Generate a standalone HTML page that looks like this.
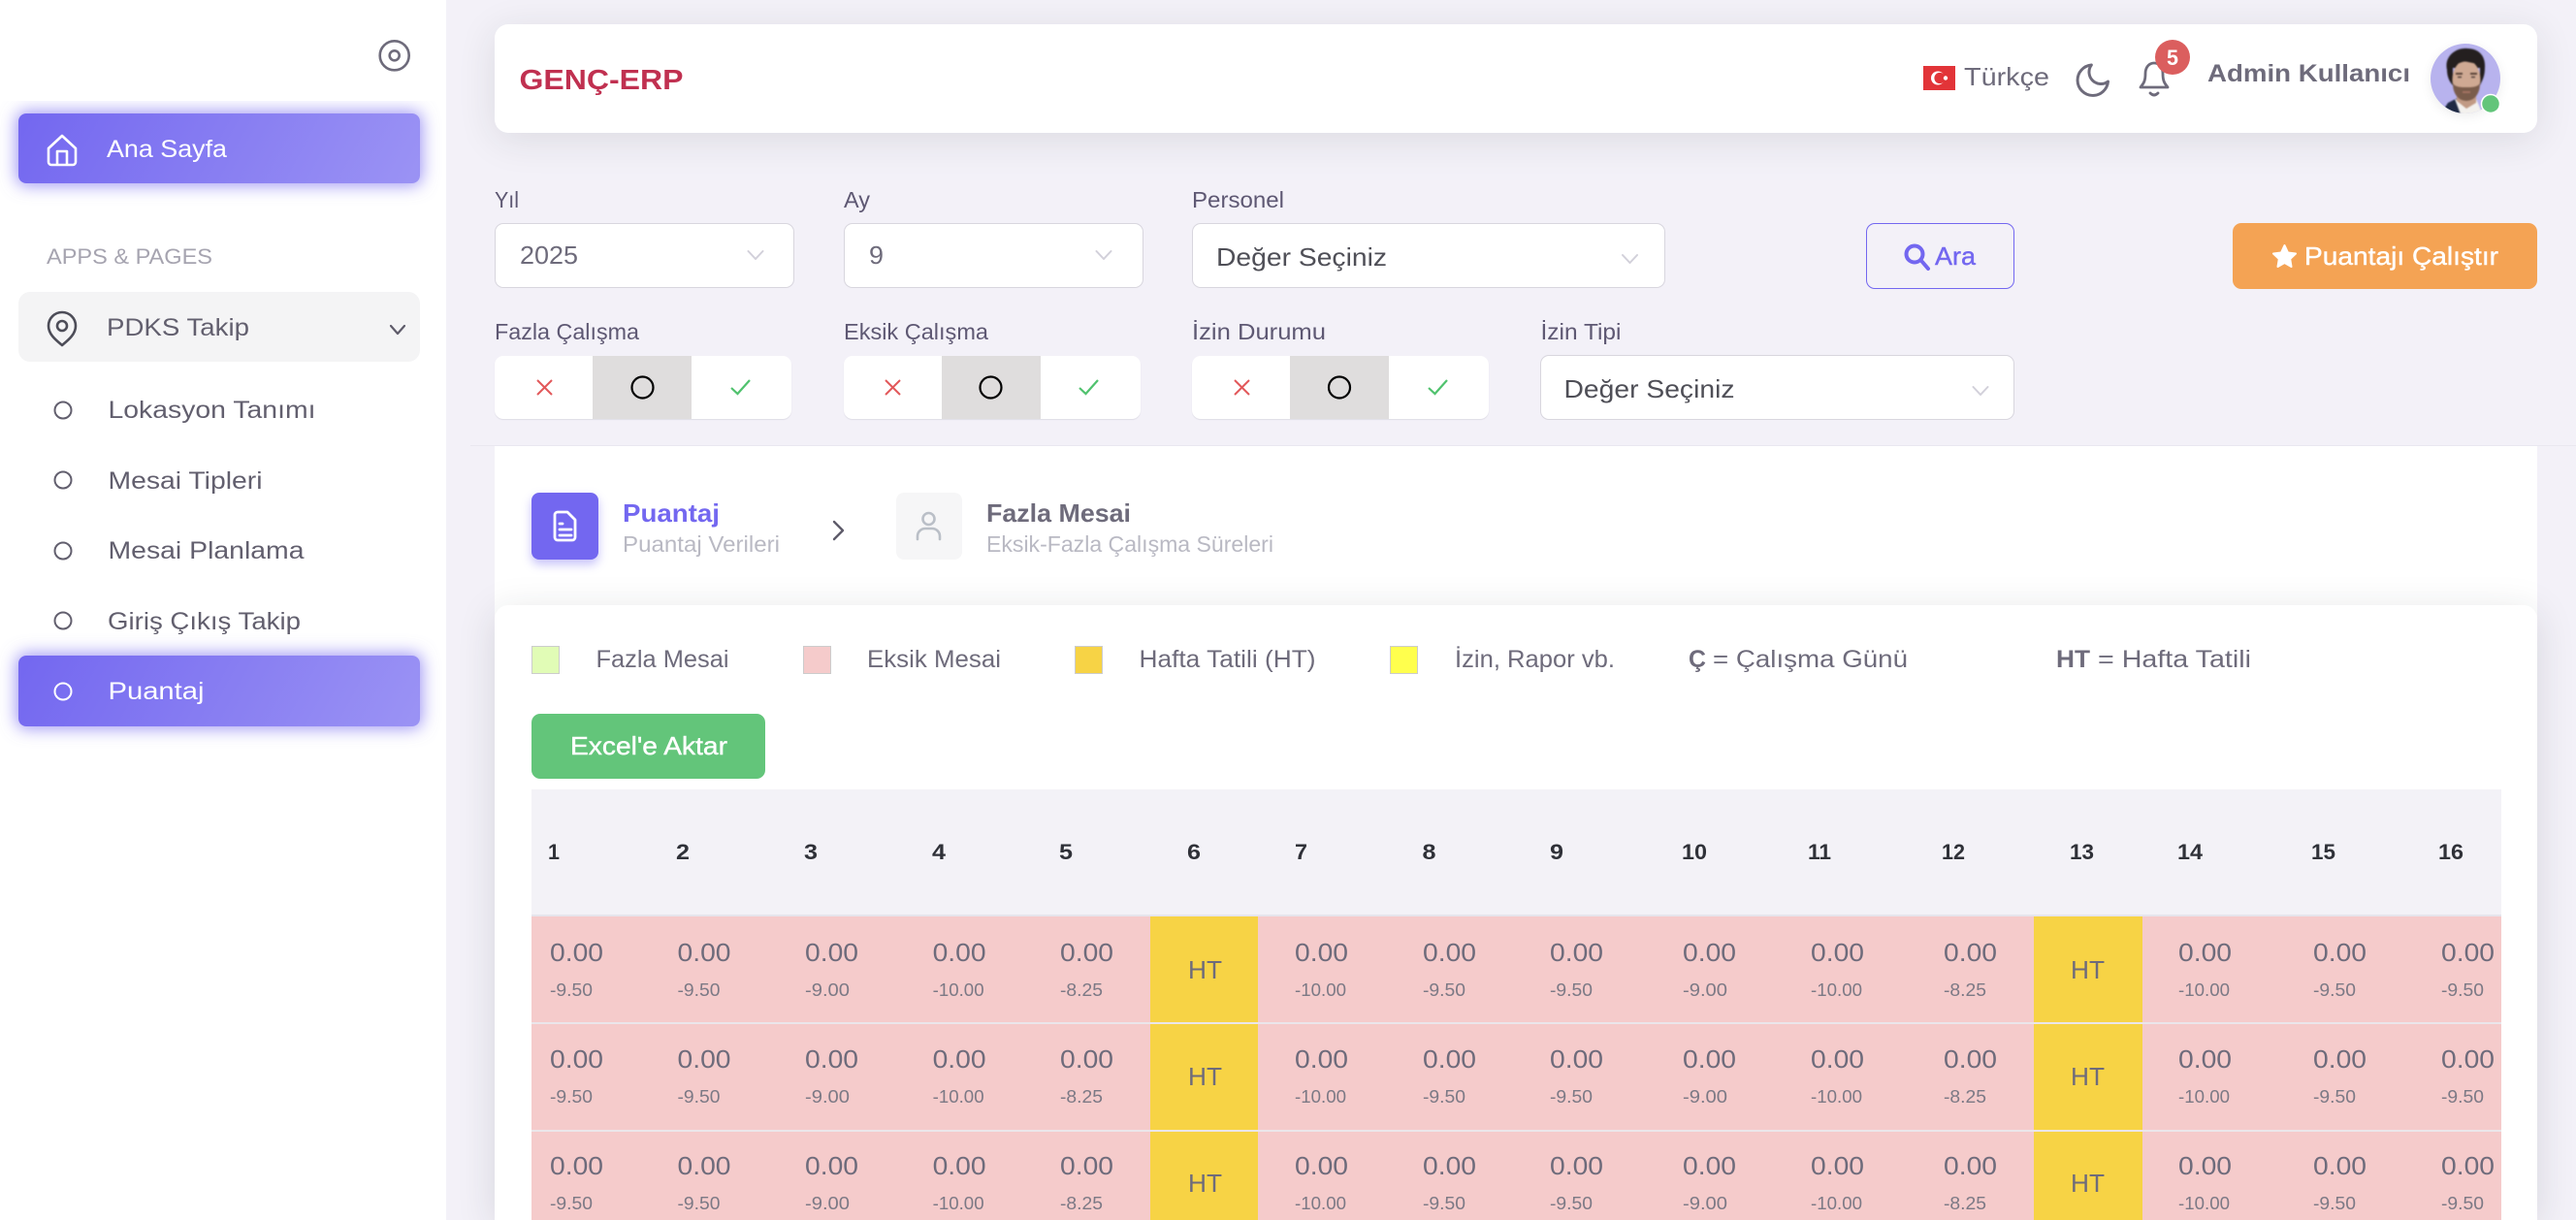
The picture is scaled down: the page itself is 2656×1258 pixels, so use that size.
<!DOCTYPE html>
<html lang="tr"><head><meta charset="utf-8"><title>GENÇ-ERP</title>
<style>
html,body{margin:0;padding:0;width:2656px;height:1258px;overflow:hidden;background:#f3f1f8}
#r{position:relative;width:2656px;height:1258px;overflow:hidden;background:#f3f1f8;contain:paint}
.b{position:absolute;box-sizing:border-box}
svg{position:absolute;left:0;top:0;display:block}
text{font-family:"Liberation Sans",sans-serif;fill:#6e6b7b}
.side{font-size:25px;fill:#625f6e}
.lb{font-size:23px;fill:#5e5873}
.sel{font-size:26px}
.lg{font-size:25px}
.v{font-size:26px}
.s{font-size:18px;fill:#7c7985}
.h{font-size:22px;font-weight:700;fill:#2f3138}
.w{fill:#fff;stroke:#fff;stroke-width:.4}
.i{fill:none;stroke-linecap:round;stroke-linejoin:round}
.ch{fill:none;stroke:#d2d0da;stroke-width:2;stroke-linecap:round;stroke-linejoin:round}
.x{fill:none;stroke:#e2585a;stroke-width:2}
.ck{fill:none;stroke:#50c26e;stroke-width:2.2}
.o{fill:none;stroke:#000;stroke-width:2.2}
</style></head><body><div id="r">
<div class="b" style="left:0;top:0;width:460px;height:1258px;background:#fff"></div>
<div class="b" style="left:510px;top:25px;width:2106px;height:112px;background:#fff;border-radius:14px;box-shadow:0 7px 40px rgba(34,41,47,.11)"></div>
<div class="b" style="left:0;top:104px;width:460px;height:130px;overflow:hidden"><div class="b" style="left:19px;top:13px;width:414px;height:72px;border-radius:8px;background:linear-gradient(118deg,#7367f0,#9b93f4);box-shadow:0 0 17px 2px rgba(115,103,240,.7)"></div></div>
<div class="b" style="left:19px;top:301px;width:414px;height:72px;border-radius:12px;background:#f4f4f5"></div>
<div class="b" style="left:19px;top:676px;width:414px;height:73px;border-radius:8px;background:linear-gradient(118deg,#7367f0,#9b93f4);box-shadow:0 0 17px 2px rgba(115,103,240,.7)"></div>
<div class="b" style="left:510px;top:230px;width:309px;height:67px;background:#fff;border:1.5px solid #d8d6de;border-radius:9px"></div>
<div class="b" style="left:870px;top:230px;width:309px;height:67px;background:#fff;border:1.5px solid #d8d6de;border-radius:9px"></div>
<div class="b" style="left:1229px;top:230px;width:488px;height:67px;background:#fff;border:1.5px solid #d8d6de;border-radius:9px"></div>
<div class="b" style="left:1924px;top:230px;width:153px;height:68px;border:1.5px solid #7367f0;border-radius:9px"></div>
<div class="b" style="left:2302px;top:230px;width:314px;height:68px;background:#f4a354;border-radius:9px"></div>
<div class="b" style="left:510px;top:367px;width:306px;height:65px;background:#fff;border-radius:9px;box-shadow:0 1px 1px #dedce6;overflow:hidden"><div class="b" style="left:101px;top:0;width:102px;height:65px;background:#dfdddd"></div></div>
<div class="b" style="left:870px;top:367px;width:306px;height:65px;background:#fff;border-radius:9px;box-shadow:0 1px 1px #dedce6;overflow:hidden"><div class="b" style="left:101px;top:0;width:102px;height:65px;background:#dfdddd"></div></div>
<div class="b" style="left:1229px;top:367px;width:306px;height:65px;background:#fff;border-radius:9px;box-shadow:0 1px 1px #dedce6;overflow:hidden"><div class="b" style="left:101px;top:0;width:102px;height:65px;background:#dfdddd"></div></div>
<div class="b" style="left:1588px;top:366px;width:489px;height:67px;background:#fff;border:1.5px solid #d8d6de;border-radius:9px"></div>
<div class="b" style="left:485px;top:459px;width:2171px;height:1px;background:#e9e7f0"></div>
<div class="b" style="left:510px;top:460px;width:2106px;height:180px;background:#fff"></div>
<div class="b" style="left:548px;top:508px;width:69px;height:69px;border-radius:8px;background:#7367f0;box-shadow:0 5px 10px rgba(115,103,240,.4)"></div>
<div class="b" style="left:924px;top:508px;width:68px;height:69px;border-radius:8px;background:#f6f6f7"></div>
<div class="b" style="left:510px;top:624px;width:2106px;height:634px;background:#fff;border-radius:14px 14px 0 0;box-shadow:0 7px 40px rgba(34,41,47,.13)"></div>
<div class="b" style="left:548px;top:666px;width:29px;height:29px;background:#e1fcb6;border:1px solid #ccc"></div>
<div class="b" style="left:828px;top:666px;width:29px;height:29px;background:#f5cbcb;border:1px solid #ccc"></div>
<div class="b" style="left:1108px;top:666px;width:29px;height:29px;background:#f7d345;border:1px solid #ccc"></div>
<div class="b" style="left:1433px;top:666px;width:29px;height:29px;background:#ffff4d;border:1px solid #ccc"></div>
<div class="b" style="left:548px;top:736px;width:241px;height:67px;background:#63c57a;border-radius:9px"></div>
<div class="b" style="left:548px;top:814px;width:2031px;height:444px;background:#f5cbcb;overflow:hidden">
<div class="b" style="left:0;top:0;width:2031px;height:131px;background:#f3f2f7;border-bottom:2px solid #e6e5ec"></div>
<div class="b" style="left:638px;top:131px;width:111px;height:313px;background:#f7d345"></div>
<div class="b" style="left:1549px;top:131px;width:112px;height:313px;background:#f7d345"></div>
<div class="b" style="left:0;top:240px;width:2031px;height:1.5px;background:#ebe6ea"></div>
<div class="b" style="left:0;top:351px;width:2031px;height:1.5px;background:#ebe6ea"></div>
</div>
<svg width="2656" height="1258" viewBox="0 0 2656 1258" xmlns="http://www.w3.org/2000/svg">
<defs><clipPath id="av"><circle cx="2542" cy="81" r="36"/></clipPath></defs>
<!-- sidebar icons -->
<circle class="i" cx="406.700" cy="57.300" r="15" stroke="#6e6b7b" stroke-width="2.6"/><circle class="i" cx="406.700" cy="57.300" r="5" stroke="#6e6b7b" stroke-width="2.6"/>
<path class="i" stroke="#fff" stroke-width="2.6" d="M50 153 L64 140 L78 153 V167 a3 3 0 0 1 -3 3 H53 a3 3 0 0 1 -3 -3 Z M59 170 V156 H69 V170"/>
<path class="i" stroke="#4d4d58" stroke-width="2.6" d="M64 356 C58 351 50 345 50 336 A14 14 0 0 1 78 336 C78 345 70 351 64 356Z"/><circle class="i" cx="64" cy="336" r="5" stroke="#4d4d58" stroke-width="2.6"/>
<path class="i" stroke="#5e5b6a" stroke-width="2.2" d="M403 336 L410 344 L417 336"/>
<g class="i" stroke="#625f6e" stroke-width="2"><circle cx="65" cy="423" r="8.500"/><circle cx="65" cy="495" r="8.500"/><circle cx="65" cy="568" r="8.500"/><circle cx="65" cy="640" r="8.500"/></g>
<circle class="i" cx="65" cy="713" r="8.500" stroke="#fff" stroke-width="2"/>
<!-- sidebar text -->
<text class="side" style="fill:#fff" x="110" y="162" textLength="124" lengthAdjust="spacingAndGlyphs">Ana Sayfa</text>
<text style="font-size:22px;fill:#a6a4b0" x="48" y="272" textLength="171" lengthAdjust="spacingAndGlyphs">APPS &amp; PAGES</text>
<text class="side" x="110" y="346" textLength="147" lengthAdjust="spacingAndGlyphs">PDKS Takip</text>
<text class="side" x="111.500" y="431" textLength="214" lengthAdjust="spacingAndGlyphs">Lokasyon Tanımı</text>
<text class="side" x="111.500" y="504" textLength="159" lengthAdjust="spacingAndGlyphs">Mesai Tipleri</text>
<text class="side" x="111.500" y="576" textLength="202" lengthAdjust="spacingAndGlyphs">Mesai Planlama</text>
<text class="side" x="111" y="649" textLength="199" lengthAdjust="spacingAndGlyphs">Giriş Çıkış Takip</text>
<text class="side" style="fill:#fff" x="111.500" y="721" textLength="99" lengthAdjust="spacingAndGlyphs">Puantaj</text>
<!-- header -->
<text style="font-size:29px;font-weight:700;fill:#c03050" x="535.500" y="92" textLength="169" lengthAdjust="spacingAndGlyphs">GENÇ-ERP</text>
<rect x="1983" y="68" width="33" height="25" fill="#e23438"/><circle cx="1998" cy="80.500" r="7" fill="#fff"/><circle cx="2000" cy="80.500" r="5.600" fill="#e23438"/><circle cx="2006" cy="80.500" r="2.200" fill="#fff"/>
<text style="font-size:26px" x="2025" y="88" textLength="88" lengthAdjust="spacingAndGlyphs">Türkçe</text>
<g transform="translate(2136.750 61.750) scale(1.75)"><path class="i" stroke="#6e6b7b" stroke-width="1.700" d="M21 12.790A9 9 0 1 1 11.210 3 7 7 0 0 0 21 12.790z"/></g>
<path class="i" stroke="#6e6b7b" stroke-width="2.800" d="M2207 90 C2210 86 2212 84 2212 76 C2212 69 2216 65 2221 65 C2226 65 2230 69 2230 76 C2230 84 2232 86 2235 90 Z M2217 96 Q2221 100 2225 96"/>
<circle cx="2240" cy="59" r="18" fill="#db5e5e"/>
<text style="font-size:22px;font-weight:700;fill:#fff" x="2234" y="67" textLength="12" lengthAdjust="spacingAndGlyphs">5</text>
<text style="font-size:25px;font-weight:700" x="2276" y="84" textLength="209" lengthAdjust="spacingAndGlyphs">Admin Kullanıcı</text>
<circle cx="2542" cy="84" r="36" fill="#000" opacity=".07" style="filter:blur(6px)"/>
<g clip-path="url(#av)">
<rect x="2500" y="40" width="84" height="84" fill="#b8b3ee"/>
<g style="filter:blur(.7px)">
<path d="M2516 118 L2524 106 L2534 101 L2541 118Z" fill="#1f2a44"/>
<path d="M2531 102 L2541 106 L2553 102 L2560 118 L2537 118Z" fill="#f3f1ee"/>
<path d="M2533 94 H2553 V106 L2543 112 L2533 104Z" fill="#c19a84"/>
<path d="M2523 72 C2520 60 2530 49 2544 50 C2556 50 2563 58 2562 70 C2562 78 2560 82 2557 88 L2557 70 L2529 70 L2529 88 C2525 84 2523 78 2523 72Z" fill="#241f1f"/>
<ellipse cx="2543" cy="82" rx="14.500" ry="20" fill="#cfa993"/>
<path d="M2529 86 C2532 90 2537 90 2543 90 C2549 90 2554 90 2557 86 C2557 97 2551 104 2543 104 C2535 104 2529 97 2529 86Z" fill="#7a5c4b"/>
<path d="M2528 68 C2534 67 2538 62 2545 64 C2550 65 2555 66 2558 68 L2558 62 C2550 55 2534 55 2528 62Z" fill="#241f1f"/>
<path d="M2532 76 h7 M2547 76 h7" stroke="#4a362c" stroke-width="1.800"/><path d="M2534 79.500 h4 M2548 79.500 h4" stroke="#50403a" stroke-width="1.500"/>
<path d="M2539 95 h8" stroke="#a87565" stroke-width="1.800"/>
</g>
</g>
<circle cx="2568" cy="107" r="9.500" fill="#62c57a" stroke="#fff" stroke-width="1.500"/>
<!-- filters -->
<text class="lb" x="510" y="214" textLength="25" lengthAdjust="spacingAndGlyphs">Yıl</text>
<text class="lb" x="870" y="214" textLength="27" lengthAdjust="spacingAndGlyphs">Ay</text>
<text class="lb" x="1229" y="214" textLength="95" lengthAdjust="spacingAndGlyphs">Personel</text>
<text class="sel" x="536" y="272" textLength="60" lengthAdjust="spacingAndGlyphs">2025</text>
<text class="sel" x="896" y="272" textLength="15" lengthAdjust="spacingAndGlyphs">9</text>
<text class="sel" style="fill:#4f4f57" x="1254" y="274" textLength="176" lengthAdjust="spacingAndGlyphs">Değer Seçiniz</text>
<path class="ch" d="M771.500 259 L779 267 L786.500 259 M1130.500 259 L1138 267 L1145.500 259 M1673 263 L1680.500 271 L1688 263 M2034.500 399 L2042 407 L2049.500 399"/>
<path class="i" stroke="#7367f0" stroke-width="4" d="M1982 270 L1988 277"/><circle class="i" cx="1974" cy="262" r="8.500" stroke="#7367f0" stroke-width="4"/>
<text class="w" style="font-size:26px;fill:#7367f0;stroke:#7367f0" x="1995" y="273" textLength="42" lengthAdjust="spacingAndGlyphs">Ara</text>
<polygon points="2355.500,253 2359,260.500 2367,261.500 2361.200,267 2362.500,275 2355.500,271 2348.500,275 2349.800,267 2344,261.500 2352,260.500" fill="#fff" stroke="#fff" stroke-width="2" stroke-linejoin="round"/>
<text class="w" style="font-size:26px" x="2376" y="273" textLength="200" lengthAdjust="spacingAndGlyphs">Puantajı Çalıştır</text>
<text class="lb" x="510" y="350" textLength="149" lengthAdjust="spacingAndGlyphs">Fazla Çalışma</text>
<text class="lb" x="870" y="350" textLength="149" lengthAdjust="spacingAndGlyphs">Eksik Çalışma</text>
<text class="lb" x="1229" y="350" textLength="138" lengthAdjust="spacingAndGlyphs">İzin Durumu</text>
<text class="lb" x="1588.500" y="350" textLength="83" lengthAdjust="spacingAndGlyphs">İzin Tipi</text>
<path class="x" d="M554 392 L569 407 M569 392 L554 407 M913 392 L928 407 M928 392 L913 407 M1273 392 L1288 407 M1288 392 L1273 407"/>
<path class="ck" d="M754 400 L760.500 406 L773 392 M1113 400 L1119.500 406 L1132 392 M1473 400 L1479.500 406 L1492 392"/>
<circle class="o" cx="662.500" cy="399.500" r="11"/><circle class="o" cx="1021.500" cy="399.500" r="11"/><circle class="o" cx="1381" cy="399.500" r="11"/>
<text class="sel" style="fill:#4f4f57" x="1612.500" y="410" textLength="176" lengthAdjust="spacingAndGlyphs">Değer Seçiniz</text>
<!-- wizard -->
<path class="i" stroke="#fff" stroke-width="2.800" d="M575 528 h10 l8 8 v18 a3 3 0 0 1 -3 3 h-15 a3 3 0 0 1 -3 -3 v-23 a3 3 0 0 1 3 -3z M577 540 h3 M577 546 h12 M577 552 h12"/>
<text style="font-size:26px;font-weight:700;fill:#7367f0" x="642" y="538" textLength="100" lengthAdjust="spacingAndGlyphs">Puantaj</text>
<text style="font-size:23px;fill:#b9b9c3" x="642" y="569" textLength="162" lengthAdjust="spacingAndGlyphs">Puantaj Verileri</text>
<path class="i" stroke="#5e5b6a" stroke-width="2.400" d="M860 538 L869 547 L860 556"/>
<circle class="i" cx="957.500" cy="535" r="6" stroke="#babfc7" stroke-width="2.600"/>
<path class="i" stroke="#babfc7" stroke-width="2.600" d="M946 556 V553 A8 8 0 0 1 954 545 H961 A8 8 0 0 1 969 553 V556"/>
<text style="font-size:26px;font-weight:700" x="1017" y="538" textLength="149" lengthAdjust="spacingAndGlyphs">Fazla Mesai</text>
<text style="font-size:23px;fill:#b9b9c3" x="1017" y="569" textLength="296" lengthAdjust="spacingAndGlyphs">Eksik-Fazla Çalışma Süreleri</text>
<!-- legend -->
<text class="lg" x="614.500" y="688" textLength="137" lengthAdjust="spacingAndGlyphs">Fazla Mesai</text>
<text class="lg" x="894" y="688" textLength="138" lengthAdjust="spacingAndGlyphs">Eksik Mesai</text>
<text class="lg" x="1174.500" y="688" textLength="182" lengthAdjust="spacingAndGlyphs">Hafta Tatili (HT)</text>
<text class="lg" x="1500" y="688" textLength="165" lengthAdjust="spacingAndGlyphs">İzin, Rapor vb.</text>
<text class="lg" style="font-weight:700" x="1741" y="688" textLength="18" lengthAdjust="spacingAndGlyphs">Ç</text>
<text class="lg" x="1766" y="688" textLength="201" lengthAdjust="spacingAndGlyphs">= Çalışma Günü</text>
<text class="lg" style="font-weight:700" x="2120" y="688" textLength="35" lengthAdjust="spacingAndGlyphs">HT</text>
<text class="lg" x="2163" y="688" textLength="158" lengthAdjust="spacingAndGlyphs">= Hafta Tatili</text>
<text class="w" style="font-size:26px" x="588" y="778" textLength="162" lengthAdjust="spacingAndGlyphs">Excel'e Aktar</text>
<!-- table head -->
<text class="h" x="565" y="886" textLength="12" lengthAdjust="spacingAndGlyphs">1</text>
<text class="h" x="697" y="886" textLength="14" lengthAdjust="spacingAndGlyphs">2</text>
<text class="h" x="829" y="886" textLength="14" lengthAdjust="spacingAndGlyphs">3</text>
<text class="h" x="961" y="886" textLength="14" lengthAdjust="spacingAndGlyphs">4</text>
<text class="h" x="1092" y="886" textLength="14" lengthAdjust="spacingAndGlyphs">5</text>
<text class="h" x="1224" y="886" textLength="14" lengthAdjust="spacingAndGlyphs">6</text>
<text class="h" x="1335" y="886" textLength="13" lengthAdjust="spacingAndGlyphs">7</text>
<text class="h" x="1466.500" y="886" textLength="14" lengthAdjust="spacingAndGlyphs">8</text>
<text class="h" x="1598" y="886" textLength="14" lengthAdjust="spacingAndGlyphs">9</text>
<text class="h" x="1734" y="886" textLength="26" lengthAdjust="spacingAndGlyphs">10</text>
<text class="h" x="1864" y="886" textLength="24" lengthAdjust="spacingAndGlyphs">11</text>
<text class="h" x="2002" y="886" textLength="24" lengthAdjust="spacingAndGlyphs">12</text>
<text class="h" x="2134" y="886" textLength="25" lengthAdjust="spacingAndGlyphs">13</text>
<text class="h" x="2245" y="886" textLength="26" lengthAdjust="spacingAndGlyphs">14</text>
<text class="h" x="2383" y="886" textLength="25" lengthAdjust="spacingAndGlyphs">15</text>
<text class="h" x="2514" y="886" textLength="26" lengthAdjust="spacingAndGlyphs">16</text>
<!-- row 1 -->
<text class="v" x="567" y="991" textLength="55" lengthAdjust="spacingAndGlyphs">0.00</text><text class="s" x="567" y="1027" textLength="44" lengthAdjust="spacingAndGlyphs">-9.50</text>
<text class="v" x="698.500" y="991" textLength="55" lengthAdjust="spacingAndGlyphs">0.00</text><text class="s" x="698.500" y="1027" textLength="44" lengthAdjust="spacingAndGlyphs">-9.50</text>
<text class="v" x="830" y="991" textLength="55" lengthAdjust="spacingAndGlyphs">0.00</text><text class="s" x="830" y="1027" textLength="46" lengthAdjust="spacingAndGlyphs">-9.00</text>
<text class="v" x="961.600" y="991" textLength="55" lengthAdjust="spacingAndGlyphs">0.00</text><text class="s" x="961.600" y="1027" textLength="53" lengthAdjust="spacingAndGlyphs">-10.00</text>
<text class="v" x="1093" y="991" textLength="55" lengthAdjust="spacingAndGlyphs">0.00</text><text class="s" x="1093" y="1027" textLength="44" lengthAdjust="spacingAndGlyphs">-8.25</text>
<text class="v" x="1225" y="1009" textLength="35" lengthAdjust="spacingAndGlyphs">HT</text>
<text class="v" x="1335" y="991" textLength="55" lengthAdjust="spacingAndGlyphs">0.00</text><text class="s" x="1335" y="1027" textLength="53" lengthAdjust="spacingAndGlyphs">-10.00</text>
<text class="v" x="1467" y="991" textLength="55" lengthAdjust="spacingAndGlyphs">0.00</text><text class="s" x="1467" y="1027" textLength="44" lengthAdjust="spacingAndGlyphs">-9.50</text>
<text class="v" x="1598" y="991" textLength="55" lengthAdjust="spacingAndGlyphs">0.00</text><text class="s" x="1598" y="1027" textLength="44" lengthAdjust="spacingAndGlyphs">-9.50</text>
<text class="v" x="1735" y="991" textLength="55" lengthAdjust="spacingAndGlyphs">0.00</text><text class="s" x="1735" y="1027" textLength="46" lengthAdjust="spacingAndGlyphs">-9.00</text>
<text class="v" x="1867" y="991" textLength="55" lengthAdjust="spacingAndGlyphs">0.00</text><text class="s" x="1867" y="1027" textLength="53" lengthAdjust="spacingAndGlyphs">-10.00</text>
<text class="v" x="2004" y="991" textLength="55" lengthAdjust="spacingAndGlyphs">0.00</text><text class="s" x="2004" y="1027" textLength="44" lengthAdjust="spacingAndGlyphs">-8.25</text>
<text class="v" x="2135" y="1009" textLength="35" lengthAdjust="spacingAndGlyphs">HT</text>
<text class="v" x="2246" y="991" textLength="55" lengthAdjust="spacingAndGlyphs">0.00</text><text class="s" x="2246" y="1027" textLength="53" lengthAdjust="spacingAndGlyphs">-10.00</text>
<text class="v" x="2385" y="991" textLength="55" lengthAdjust="spacingAndGlyphs">0.00</text><text class="s" x="2385" y="1027" textLength="44" lengthAdjust="spacingAndGlyphs">-9.50</text>
<text class="v" x="2517" y="991" textLength="55" lengthAdjust="spacingAndGlyphs">0.00</text><text class="s" x="2517" y="1027" textLength="44" lengthAdjust="spacingAndGlyphs">-9.50</text>
<!-- row 2 -->
<text class="v" x="567" y="1101" textLength="55" lengthAdjust="spacingAndGlyphs">0.00</text><text class="s" x="567" y="1137" textLength="44" lengthAdjust="spacingAndGlyphs">-9.50</text>
<text class="v" x="698.500" y="1101" textLength="55" lengthAdjust="spacingAndGlyphs">0.00</text><text class="s" x="698.500" y="1137" textLength="44" lengthAdjust="spacingAndGlyphs">-9.50</text>
<text class="v" x="830" y="1101" textLength="55" lengthAdjust="spacingAndGlyphs">0.00</text><text class="s" x="830" y="1137" textLength="46" lengthAdjust="spacingAndGlyphs">-9.00</text>
<text class="v" x="961.600" y="1101" textLength="55" lengthAdjust="spacingAndGlyphs">0.00</text><text class="s" x="961.600" y="1137" textLength="53" lengthAdjust="spacingAndGlyphs">-10.00</text>
<text class="v" x="1093" y="1101" textLength="55" lengthAdjust="spacingAndGlyphs">0.00</text><text class="s" x="1093" y="1137" textLength="44" lengthAdjust="spacingAndGlyphs">-8.25</text>
<text class="v" x="1225" y="1119" textLength="35" lengthAdjust="spacingAndGlyphs">HT</text>
<text class="v" x="1335" y="1101" textLength="55" lengthAdjust="spacingAndGlyphs">0.00</text><text class="s" x="1335" y="1137" textLength="53" lengthAdjust="spacingAndGlyphs">-10.00</text>
<text class="v" x="1467" y="1101" textLength="55" lengthAdjust="spacingAndGlyphs">0.00</text><text class="s" x="1467" y="1137" textLength="44" lengthAdjust="spacingAndGlyphs">-9.50</text>
<text class="v" x="1598" y="1101" textLength="55" lengthAdjust="spacingAndGlyphs">0.00</text><text class="s" x="1598" y="1137" textLength="44" lengthAdjust="spacingAndGlyphs">-9.50</text>
<text class="v" x="1735" y="1101" textLength="55" lengthAdjust="spacingAndGlyphs">0.00</text><text class="s" x="1735" y="1137" textLength="46" lengthAdjust="spacingAndGlyphs">-9.00</text>
<text class="v" x="1867" y="1101" textLength="55" lengthAdjust="spacingAndGlyphs">0.00</text><text class="s" x="1867" y="1137" textLength="53" lengthAdjust="spacingAndGlyphs">-10.00</text>
<text class="v" x="2004" y="1101" textLength="55" lengthAdjust="spacingAndGlyphs">0.00</text><text class="s" x="2004" y="1137" textLength="44" lengthAdjust="spacingAndGlyphs">-8.25</text>
<text class="v" x="2135" y="1119" textLength="35" lengthAdjust="spacingAndGlyphs">HT</text>
<text class="v" x="2246" y="1101" textLength="55" lengthAdjust="spacingAndGlyphs">0.00</text><text class="s" x="2246" y="1137" textLength="53" lengthAdjust="spacingAndGlyphs">-10.00</text>
<text class="v" x="2385" y="1101" textLength="55" lengthAdjust="spacingAndGlyphs">0.00</text><text class="s" x="2385" y="1137" textLength="44" lengthAdjust="spacingAndGlyphs">-9.50</text>
<text class="v" x="2517" y="1101" textLength="55" lengthAdjust="spacingAndGlyphs">0.00</text><text class="s" x="2517" y="1137" textLength="44" lengthAdjust="spacingAndGlyphs">-9.50</text>
<!-- row 3 -->
<text class="v" x="567" y="1211" textLength="55" lengthAdjust="spacingAndGlyphs">0.00</text><text class="s" x="567" y="1247" textLength="44" lengthAdjust="spacingAndGlyphs">-9.50</text>
<text class="v" x="698.500" y="1211" textLength="55" lengthAdjust="spacingAndGlyphs">0.00</text><text class="s" x="698.500" y="1247" textLength="44" lengthAdjust="spacingAndGlyphs">-9.50</text>
<text class="v" x="830" y="1211" textLength="55" lengthAdjust="spacingAndGlyphs">0.00</text><text class="s" x="830" y="1247" textLength="46" lengthAdjust="spacingAndGlyphs">-9.00</text>
<text class="v" x="961.600" y="1211" textLength="55" lengthAdjust="spacingAndGlyphs">0.00</text><text class="s" x="961.600" y="1247" textLength="53" lengthAdjust="spacingAndGlyphs">-10.00</text>
<text class="v" x="1093" y="1211" textLength="55" lengthAdjust="spacingAndGlyphs">0.00</text><text class="s" x="1093" y="1247" textLength="44" lengthAdjust="spacingAndGlyphs">-8.25</text>
<text class="v" x="1225" y="1229" textLength="35" lengthAdjust="spacingAndGlyphs">HT</text>
<text class="v" x="1335" y="1211" textLength="55" lengthAdjust="spacingAndGlyphs">0.00</text><text class="s" x="1335" y="1247" textLength="53" lengthAdjust="spacingAndGlyphs">-10.00</text>
<text class="v" x="1467" y="1211" textLength="55" lengthAdjust="spacingAndGlyphs">0.00</text><text class="s" x="1467" y="1247" textLength="44" lengthAdjust="spacingAndGlyphs">-9.50</text>
<text class="v" x="1598" y="1211" textLength="55" lengthAdjust="spacingAndGlyphs">0.00</text><text class="s" x="1598" y="1247" textLength="44" lengthAdjust="spacingAndGlyphs">-9.50</text>
<text class="v" x="1735" y="1211" textLength="55" lengthAdjust="spacingAndGlyphs">0.00</text><text class="s" x="1735" y="1247" textLength="46" lengthAdjust="spacingAndGlyphs">-9.00</text>
<text class="v" x="1867" y="1211" textLength="55" lengthAdjust="spacingAndGlyphs">0.00</text><text class="s" x="1867" y="1247" textLength="53" lengthAdjust="spacingAndGlyphs">-10.00</text>
<text class="v" x="2004" y="1211" textLength="55" lengthAdjust="spacingAndGlyphs">0.00</text><text class="s" x="2004" y="1247" textLength="44" lengthAdjust="spacingAndGlyphs">-8.25</text>
<text class="v" x="2135" y="1229" textLength="35" lengthAdjust="spacingAndGlyphs">HT</text>
<text class="v" x="2246" y="1211" textLength="55" lengthAdjust="spacingAndGlyphs">0.00</text><text class="s" x="2246" y="1247" textLength="53" lengthAdjust="spacingAndGlyphs">-10.00</text>
<text class="v" x="2385" y="1211" textLength="55" lengthAdjust="spacingAndGlyphs">0.00</text><text class="s" x="2385" y="1247" textLength="44" lengthAdjust="spacingAndGlyphs">-9.50</text>
<text class="v" x="2517" y="1211" textLength="55" lengthAdjust="spacingAndGlyphs">0.00</text><text class="s" x="2517" y="1247" textLength="44" lengthAdjust="spacingAndGlyphs">-9.50</text>
</svg>
</div></body></html>
